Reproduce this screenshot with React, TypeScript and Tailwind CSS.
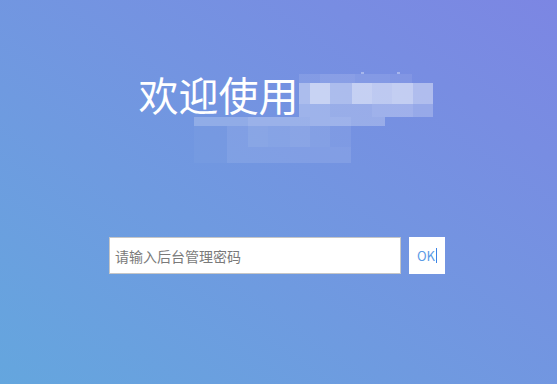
import React from 'react'

// pixel mosaic that hides the product name in the title
const mosaic: [number, number, number, number, number][] = [
  [299, 74, 21, 9, 0.1],
  [320, 74, 35, 9, 0.14],
  [355, 74, 35, 9, 0.1],
  [390, 74, 22, 9, 0.08],
  [299, 83, 11, 21, 0.4],
  [310, 83, 20, 21, 0.6],
  [330, 83, 22, 21, 0.4],
  [352, 83, 20, 21, 0.58],
  [372, 83, 20, 21, 0.52],
  [392, 83, 21, 21, 0.56],
  [413, 83, 20, 21, 0.42],
  [299, 104, 31, 13, 0.3],
  [330, 104, 42, 13, 0.26],
  [372, 104, 41, 13, 0.3],
  [413, 104, 20, 13, 0.24],
  [194, 117, 54, 9, 0.22],
  [248, 117, 62, 9, 0.28],
  [310, 117, 41, 9, 0.3],
  [351, 117, 34, 9, 0.26],
  [194, 126, 33, 37, 0.03],
  [227, 126, 21, 37, 0.1],
  [248, 126, 20, 21, 0.16],
  [268, 126, 22, 21, 0.14],
  [290, 126, 20, 21, 0.16],
  [310, 126, 20, 21, 0.12],
  [330, 126, 21, 21, 0.08],
  [248, 147, 103, 16, 0.1],
  [361, 72, 3, 2, 0.35],
  [397, 72, 3, 2, 0.35],
]

export default function App() {
  return (
    <div
      className="relative h-[384px] w-full overflow-hidden bg-gradient-to-tr from-[#64a6de] to-[#7c86e3]"
      style={{ fontFamily: '"Noto Sans CJK SC", "Noto Sans", sans-serif' }}
    >
      <div className="flex flex-col items-center pt-[64px]">
        <h1 className="ml-[14px] w-[294px] text-[40px] leading-[60px] font-normal text-white">
          欢迎使用
        </h1>

        <div className="mt-[113px] mr-[3px] flex items-stretch gap-2">
          <input
            className="h-[37px] w-[292px] border border-[#c6c6c6] bg-white pl-[5px] text-sm text-gray-700 outline-none placeholder:text-[#7a7a7a]"
            placeholder="请输入后台管理密码"
          />
          <button className="flex h-[37px] w-[36px] items-center justify-center bg-white text-[13px] text-[#5b9be6]">
            OK<span className="ml-[1px] h-[15px] w-px bg-[#3b82e6]" />
          </button>
        </div>
      </div>

      <div className="pointer-events-none absolute inset-0">
        {mosaic.map(([x, y, w, h, o], i) => (
          <div
            key={i}
            className="absolute bg-white"
            style={{ left: x, top: y, width: w, height: h, opacity: o }}
          />
        ))}
      </div>
    </div>
  )
}
